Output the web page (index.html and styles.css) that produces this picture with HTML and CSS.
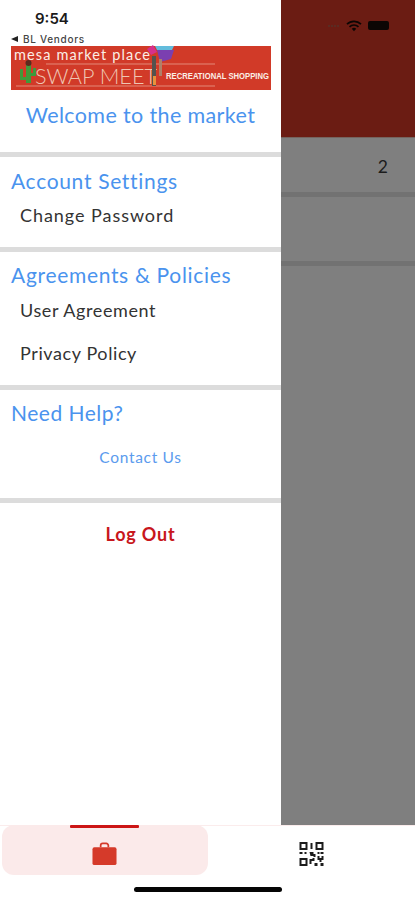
FILE: index.html
```html
<!DOCTYPE html>
<html lang="en">
<head>
<meta charset="utf-8">
<title>BL Vendors</title>
<link rel="stylesheet" href="styles.css">
</head>
<body>
<div class="screen">
  <div class="main">
    <aside class="drawer">
      <div class="status-time">9:54</div>
      <div class="back-app"><span class="back-arrow"></span>BL Vendors</div>
      <svg class="logo" viewBox="0 0 260 44" role="img" aria-label="Mesa Market Place Swap Meet">
        <rect width="260" height="44" fill="#d13a28"/>
        <text class="logo-top" x="3" y="14" textLength="136" lengthAdjust="spacing">mesa market place</text>
        <text class="logo-swap" x="24" y="38" textLength="122" lengthAdjust="spacingAndGlyphs">SWAP MEET</text>
        <text class="logo-rec" x="155" y="33" textLength="103" lengthAdjust="spacingAndGlyphs">RECREATIONAL SHOPPING</text>
        <path d="M35 18H204M5 40H204" stroke="#e8a08e" stroke-width=".8" fill="none"/>
        <path d="M136 3 L142 -1 L146 6 L140 9Z" fill="#d6308c"/>
        <path d="M144 0H163L161 4H146Z" fill="#62bcdc"/>
        <path d="M146 4H163L160 13L149 16Z" fill="#7b3fb0"/>
        <path d="M141 10H145V40H141Z" fill="#54524e"/>
        <path d="M142 30H145V39H142Z" fill="#e8913c"/>
        <path d="M148 13H151V30H148Z" fill="#b08068"/>
        <path d="M15 18h5v19h-5zM9 23h3v8h5v3H9zM22 22h3v8h-5v-3h2z" fill="#3f9a3a"/>
        <circle cx="17.500" cy="17" r="3" fill="#5c2a1e"/>
      </svg>
      <div class="welcome">Welcome to the market</div>
      <section class="group group-account">
        <h2 class="group-title">Account Settings</h2>
        <a class="item">Change Password</a>
      </section>
      <section class="group group-policy">
        <h2 class="group-title">Agreements &amp; Policies</h2>
        <a class="item">User Agreement</a>
        <a class="item">Privacy Policy</a>
      </section>
      <section class="group group-help">
        <h2 class="group-title">Need Help?</h2>
        <a class="contact">Contact Us</a>
      </section>
      <section class="group group-logout">
        <a class="logout">Log Out</a>
      </section>
    </aside>
    <div class="backdrop">
      <header class="backdrop-head">
        <div class="status-icons">
          <span class="signal"><i></i><i></i><i></i><i></i></span>
          <svg class="wifi" viewBox="0 0 16 12"><path d="M1 4.200a10 10 0 0 1 14 0M3.500 6.800a6.500 6.500 0 0 1 9 0" fill="none" stroke="#0c0604" stroke-width="1.700"/><path d="M5.800 8.800a3.200 3.200 0 0 1 4.400 0L8 11.200Z" fill="#0c0604"/></svg>
          <span class="battery"></span>
        </div>
      </header>
      <div class="back-row back-row-num"><span class="count">2</span></div>
      <div class="back-row back-row-empty"></div>
    </div>
  </div>
  <nav class="tabbar">
    <div class="tabs">
      <div class="tab tab-active">
        <span class="tab-indicator"></span>
        <svg class="tab-icon" viewBox="0 0 26 24"><path d="M9 5V3.200A2.200 2.200 0 0 1 11.200 1h3.600A2.200 2.200 0 0 1 17 3.200V5" fill="none" stroke="#d53a2a" stroke-width="1.800"/><rect x="0.500" y="5" width="25" height="18.500" rx="2" fill="#d53a2a"/></svg>
      </div>
      <div class="tab">
        <svg class="tab-icon" viewBox="0 0 24 24">
          <path fill-rule="evenodd" d="M0 0h8v8H0zM2 2v4h4V2zM16 0h8v8h-8zM18 2v4h4V2zM0 16h8v8H0zM2 18v4h4v-4z" fill="#1c1c1c"/>
          <path d="M11 1h2v6h-2zM0 10h3v2H0zM5 10h2v2H5zM10 10h4v2h2v3h-2v-1h-3zM18 10h2v2h-2zM21 10h3v2h-3zM18 14h2v2h2v-2h2v4h-2v2h-2v-2h-2zM10 17h3v-1h2v3h-3v3h-2zM15 21h3v3h-3zM21 21h3v3h-3z" fill="#1c1c1c"/>
        </svg>
      </div>
    </div>
    <span class="home-bar"></span>
  </nav>
</div>
</body>
</html>
```
FILE: styles.css
```css
* { box-sizing: border-box; }
html, body { margin: 0; padding: 0; background: #fff; }
body { font-family: Lato, "Open Sans", sans-serif; }
.screen { width: 415px; height: 900px; display: flex; flex-direction: column; overflow: hidden; }
.main { height: 825px; display: flex; }
.drawer { width: 281px; background: #fff; display: flex; flex-direction: column; }
.status-time { padding: 10px 0 0 35px; height: 31px; font: 600 15px/18px Inter, sans-serif; color: #1a1a1a; }
.back-app { display: flex; align-items: center; height: 15px; padding-left: 11px; font: 500 10px/14px Inter, sans-serif; color: #444; letter-spacing: .7px; }
.back-arrow { width: 0; height: 0; border: 3.500px solid transparent; border-right: 7px solid #222; border-left: 0; margin-right: 5px; }
.logo { display: block; width: 260px; height: 44px; margin-left: 11px; overflow: visible; flex: none; }
.logo-top { font: 400 14.500px Lato, sans-serif; fill: #fbeee6; }
.logo-swap { font: 300 21px Lato, sans-serif; fill: #efc5b2; }
.logo-rec { font: 700 8.500px "Liberation Sans", sans-serif; fill: #fbeee6; }
.welcome { height: 62px; padding-top: 12px; text-align: center; font-size: 21.500px; line-height: 26px; color: #4a93ee; letter-spacing: .37px; }
.group { border-top: 5px solid #dcdcdc; padding-left: 11px; }
.group-title { margin: 0; font-size: 21px; font-weight: 400; line-height: 26px; color: #4a93ee; letter-spacing: .68px; }
.item { display: block; padding-left: 9px; font-size: 18px; line-height: 22px; color: #333; letter-spacing: .6px; }
.group-account { height: 95px; padding-top: 11px; }
.group-account .item { margin-top: 10px; letter-spacing: .95px; }
.group-policy { height: 138px; padding-top: 10px; }
.group-policy .item { margin-top: 11px; }
.group-policy .item + .item { margin-top: 21px; }
.group-help { height: 113px; padding-top: 10px; }
.group-help .group-title { letter-spacing: .5px; }
.contact { display: block; margin: 21px 0 0 -11px; text-align: center; font-size: 15.500px; line-height: 20px; color: #5b9bee; letter-spacing: .7px; }
.group-logout { padding: 19px 0 0; }
.logout { display: block; text-align: center; font-size: 18px; font-weight: 700; line-height: 24px; color: #c8161c; letter-spacing: .8px; }
.backdrop { flex: 1; background: #7f7f7f; display: flex; flex-direction: column; }
.backdrop-head { height: 138px; background: #6b1c13; border-bottom: 1px solid #75645f; padding: 20px 22px 0 47px; }
.status-icons { display: flex; align-items: center; gap: 6px; height: 11px; }
.signal { display: flex; gap: 1px; align-items: flex-end; margin-right: 1px; }
.signal i { display: block; width: 2px; height: 2px; background: #5a2b22; }
.wifi { width: 16px; height: 12px; }
.battery { width: 21px; height: 9px; background: #0c0604; border-radius: 2px; }
.back-row { border-bottom: 5px solid #727272; }
.back-row-num { height: 59px; display: flex; justify-content: flex-end; padding: 19px 27px 0 0; }
.count { font-size: 17.500px; line-height: 20px; color: #1c1c1c; }
.back-row-empty { height: 69px; }
.tabbar { position: relative; height: 75px; background: #fff; border-top: 1px solid #fbecec; }
.tabs { display: flex; height: 50px; margin-top: -1px; padding-left: 2px; }
.tab { position: relative; width: 206px; display: flex; justify-content: center; padding-top: 17px; }
.tab-active { background: #fbeaea; border-radius: 12px; }
.tab-indicator { position: absolute; top: 0; left: 68px; width: 69px; height: 3px; background: #cc1515; border-radius: 1px; }
.tab-icon { width: 25px; height: 24px; display: block; }
.tab-active .tab-icon { margin-left: -1px; }
.home-bar { position: absolute; left: 134px; top: 61px; width: 148px; height: 5px; border-radius: 3px; background: #050505; }
```
